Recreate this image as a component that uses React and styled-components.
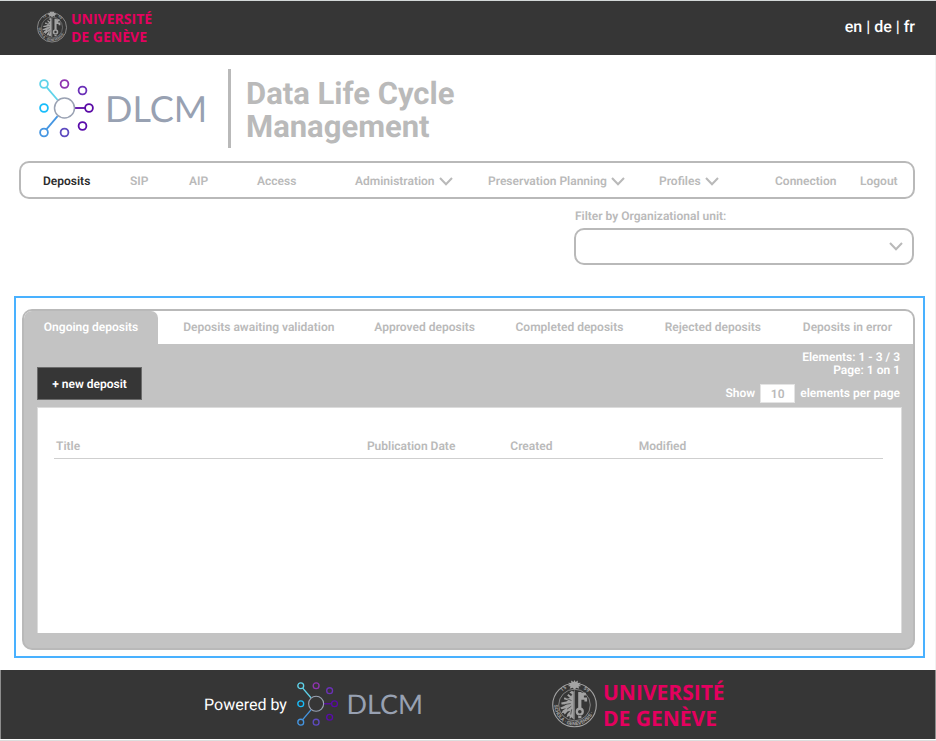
import React, { useId, useState } from "react";
import styled, { createGlobalStyle, css } from "styled-components";

const color = {
  dark: "#363636",
  line: "#b9b9b9",
  text: "#bababa",
  panel: "#c3c3c3",
  focus: "#49b1ff",
  pink: "#e4005f",
};

const GlobalStyle = createGlobalStyle`
  *, *::before, *::after { box-sizing: border-box; }
  body { margin: 0; background: #fff; font-family: Roboto, sans-serif; text-rendering: geometricPrecision; }
  button, input, select { font: inherit; color: inherit; text-rendering: inherit; }
`;

const Page = styled.div`
  min-height: 100vh;
  display: flex;
  flex-direction: column;
  border-top: 1px solid #d3d8d8;
  border-bottom: 1px solid #dddddd;
  font-size: 12px;
  line-height: 14px;
  font-weight: 600;
  color: ${color.text};
`;

const TopBar = styled.header`
  display: flex;
  align-items: center;
  justify-content: space-between;
  height: 54px;
  padding: 0 21px 2px 37px;
  background: ${color.dark};
`;

const Languages = styled.nav`
  color: #fff;
  font-size: 16px;
  line-height: 18px;
  font-weight: 500;
  a { color: inherit; text-decoration: none; }
`;

const Main = styled.main`
  flex: 1;
  border-right: 1px solid #f2f2f2;
`;

const Brand = styled.div`
  display: flex;
  align-items: center;
  margin: 14px 20px 13px 39px;
`;

const BrandTitle = styled.h1`
  margin: 0 0 0 21px;
  padding: 8px 0 5px 15px;
  border-left: 3px solid ${color.line};
  font-size: 31px;
  line-height: 33px;
  font-weight: 700;
  max-width: 260px;
`;

const NavBar = styled.nav`
  display: grid;
  grid-template-columns: 87fr 59fr 68fr 98fr 133fr 171fr 116fr 85fr 53fr;
  align-items: center;
  height: 38px;
  margin: 0 20px 0 19px;
  padding: 2px 0 0 22px;
  border: 2px solid ${color.line};
  border-radius: 10px;
`;

const navItem = css`
  justify-self: start;
  padding: 0;
  border: 0;
  background: none;
  color: ${(p) => (p.$active ? "#2d2d2d" : color.text)};
  text-decoration: none;
  white-space: nowrap;
  cursor: pointer;
`;

const NavLink = styled.a`${navItem}`;

const NavMenu = styled.button`
  ${navItem}
  display: flex;
  align-items: center;
  gap: 4px;
`;

const Filter = styled.div`
  display: flex;
  flex-direction: column;
  gap: 5px;
  width: 340px;
  margin: 10px 21px 31px auto;
  label { padding-left: 1px; }
`;

const SelectBox = styled.div`
  position: relative;
  svg { position: absolute; right: 11px; top: 14px; pointer-events: none; }
`;

const Select = styled.select`
  display: block;
  width: 100%;
  height: 37px;
  padding: 0 32px 0 12px;
  appearance: none;
  border: 2px solid ${color.line};
  border-radius: 10px;
  background: #fff;
`;

const Selection = styled.section`
  margin: 0 10px 12px 14px;
  padding: 11px 8px 6px 6px;
  border: 2px solid ${color.focus};
`;

const Panel = styled.div`
  display: flex;
  flex-direction: column;
  min-height: 341px;
  border: 2px solid ${color.line};
  border-radius: 10px;
  background: ${color.panel};
  overflow: hidden;
`;

const Tabs = styled.div`
  display: grid;
  grid-template-columns: 134fr 191fr 141fr 149fr 138fr 135fr;
  height: 33px;
  background: #fff;
`;

const Tab = styled.button`
  padding: 0 0 2px ${(p) => (p.$active ? 0 : 25)}px;
  border: 0;
  border-top-right-radius: ${(p) => (p.$active ? 7 : 0)}px;
  background: ${(p) => (p.$active ? color.panel : "transparent")};
  color: ${(p) => (p.$active ? "#fff" : color.text)};
  text-align: ${(p) => (p.$active ? "center" : "left")};
  white-space: nowrap;
  cursor: pointer;
`;

const Tools = styled.div`
  display: flex;
  justify-content: space-between;
  align-items: flex-end;
  padding: 7px 13px 4px;
  color: #fff;
`;

const NewButton = styled.button`
  height: 33px;
  width: 105px;
  margin-bottom: 3px;
  padding: 0;
  border: 1px solid #6b6b6b;
  background: ${color.dark};
  color: #fff;
  cursor: pointer;
`;

const Paging = styled.div`
  display: flex;
  flex-direction: column;
  text-align: right;
  line-height: 13px;
  p { margin: 0; }
`;

const PageSize = styled.div`
  display: flex;
  align-items: center;
  gap: 5px;
  margin-top: 7px;
  input {
    width: 35px;
    height: 19px;
    padding: 0;
    border: 1px solid #e4e4e4;
    background: #fff;
    color: ${color.text};
    text-align: center;
  }
`;

const Card = styled.div`
  flex: 1;
  margin: 0 11px 15px 13px;
  padding: 31px 18px 0 16px;
  border: 1px solid #dcdcdc;
  border-bottom: 0;
  background: #fff;
`;

const Table = styled.table`
  width: 100%;
  table-layout: fixed;
  border-collapse: collapse;
  th {
    padding: 0 0 5px 2px;
    border-bottom: 1px solid #cfcfcf;
    text-align: left;
    font-weight: 600;
  }
`;

const Col = styled.col`
  width: ${(p) => p.$width};
`;

const Footer = styled.footer`
  display: flex;
  justify-content: center;
  align-items: center;
  height: 69px;
  margin-bottom: 1px;
  padding-right: 6px;
  border: solid #8d8d8d;
  border-width: 0 1px;
  background: ${color.dark};
`;

const Powered = styled.div`
  display: flex;
  align-items: center;
  gap: 10px;
  margin-right: 129px;
  color: #fff;
  font-size: 16px;
  line-height: 20px;
  font-weight: 400;
`;

const Drawing = styled.svg`
  display: block;
  flex: none;
  overflow: visible;
`;

const Chevron = () => (
  <Drawing width="14" height="9" viewBox="0 0 14 9" fill="none" stroke={color.line} strokeWidth="2" aria-hidden="true">
    <path d="M1 1 7 7.3 13 1" />
  </Drawing>
);

const satellites = [
  [5, 6, "#5fd3ea"],
  [25.5, 6, "#9034b0"],
  [43.5, 12.5, "#6b31b8"],
  [5, 30, "#18bdfb"],
  [50, 30, "#5a0aa6"],
  [43.5, 48, "#5a0cab"],
  [5, 54.5, "#4596e2"],
  [25.5, 54.5, "#5e4bc0"],
];

const DlcmLogo = ({ width, height }) => (
  <Drawing width={width} height={height} viewBox="0 1 168 60" role="img" aria-label="DLCM">
    <g fill="none" strokeWidth="1.8">
      <path d="M7.6 9.2 18.6 22" stroke="#5fd3ea" />
      <path d="M7.6 51.2 18.6 38.2" stroke="#4596e2" />
      <path d="M35.8 30H46" stroke="#5a0aa6" />
      <circle cx="25.5" cy="30" r="10" stroke="#9aa2b3" strokeWidth="1.5" />
      {satellites.map(([x, y, stroke]) => (
        <circle key={`${x}-${y}`} cx={x} cy={y} r="3.9" stroke={stroke} />
      ))}
    </g>
    <text x="66" y="44" fontFamily="Lato, sans-serif" fontSize="36" fontWeight="400" fill="#98a1b2">DLCM</text>
  </Drawing>
);

const UniversityLogo = ({ width, height }) => {
  const ring = useId();
  return (
    <Drawing width={width} height={height} viewBox="0 -4 174 58" role="img" aria-label="Université de Genève">
      <defs>
        <path id={`${ring}b`} d="M4 17A20.2 20.2 0 1 0 41 17" />
        <path id={`${ring}t`} d="M6 17.5A18 18 0 0 1 39 17.5" />
      </defs>
      <g fill="none" stroke="#a3a3a3">
        <circle cx="22.5" cy="25" r="21.8" strokeWidth="1.1" />
        <circle cx="22.5" cy="25" r="15.8" strokeWidth="0.7" />
      </g>
      <g fill="#a3a3a3" fontFamily="Roboto, sans-serif" fontSize="5" fontWeight="700">
        <text><textPath href={`#${ring}b`} startOffset="8">SCHOLA · GENEVENSIS ·</textPath></text>
        <text><textPath href={`#${ring}t`} startOffset="7">15</textPath></text>
        <text><textPath href={`#${ring}t`} startOffset="30">59</textPath></text>
      </g>
      <g fill="#a3a3a3">
        <path d="m22.5 0 1 2 2.4-1.4-.2 2.5 3-.4-1.6 2.1 2.1 1.2-2.7.6.8 2.2-3-1.1-1.8 2.1-1.8-2.1-3 1.1.8-2.2-2.7-.6 2.1-1.2-1.6-2.1 3 .4-.2-2.5 2.4 1.4Z" />
        <path d="M21.8 11.4v28.4l-2.3-2.6-1.8 1.8-.2-3.2-3 1.6.9-3.5 3-3.1-2.9.8-2.7 3-1.3-1.8-1.9.5 1.1-2.7 3.5-2.4-4.6 1.1-1.5-1.6 3.9-1.7 3-1.8-5.4.2-.4-1.8 5-1 2-1.1-4.3-1.2.3-1.8 4.2.8 1.6-.4-2.8-2.5 1.1-1.4 3 2.3.3-2.4-2.2-1.3 2.3-1.7Z" />
        <path d="M26.2 12h3.2v16.3h-3.2zM29.4 12.8h4.5v2.7h-2v2h3.2v4.1h-2.7v-1.8h-3Z" />
        <path d="M27.8 27.5a4.1 4.1 0 1 1 0 8.2 4.1 4.1 0 0 1 0-8.2m0 2.4a1.8 1.8 0 1 0 0 3.6 1.8 1.8 0 0 0 0-3.6M26.2 35h3.2v3.2h-3.2Z" fillRule="evenodd" />
      </g>
      <path d="M22.5 10.4v29.2" stroke="#a3a3a3" strokeWidth="0.6" />
      <g fill="none" stroke={color.dark} strokeWidth="0.7">
        <path d="m14.5 18.5 5 2M13 24.5l5.7-1M15 29.2l4.3-3M18.7 34.5l1-5.2" />
        <circle cx="19.2" cy="14.6" r="0.5" />
      </g>
      <g fill={color.pink} fontFamily="'Open Sans', sans-serif" fontWeight="700">
        <text x="51" y="20" fontSize="21">UNIVERSITÉ</text>
        <text x="51" y="46" fontSize="21">DE GENÈVE</text>
      </g>
    </Drawing>
  );
};

const navItems = [
  { label: "Deposits", active: true },
  { label: "SIP" },
  { label: "AIP" },
  { label: "Access" },
  { label: "Administration", menu: true },
  { label: "Preservation Planning", menu: true },
  { label: "Profiles", menu: true },
  { label: "Connection" },
  { label: "Logout" },
];

const tabs = [
  "Ongoing deposits",
  "Deposits awaiting validation",
  "Approved deposits",
  "Completed deposits",
  "Rejected deposits",
  "Deposits in error",
];

const columns = [
  ["Title", "37.5%"],
  ["Publication Date", "17.3%"],
  ["Created", "15.5%"],
  ["Modified", "auto"],
];

export default function App() {
  const [pageSize, setPageSize] = useState("10");
  return (
    <Page>
      <GlobalStyle />
      <TopBar>
        <UniversityLogo width={116} height={39} />
        <Languages aria-label="Language">
          <a href="#en">en</a> | <a href="#de">de</a> | <a href="#fr">fr</a>
        </Languages>
      </TopBar>
      <Main>
        <Brand>
          <DlcmLogo width={168} height={60} />
          <BrandTitle>Data Life Cycle Management</BrandTitle>
        </Brand>
        <NavBar aria-label="Main">
          {navItems.map(({ label, active, menu }) =>
            menu ? (
              <NavMenu key={label} type="button" aria-haspopup="menu">
                {label}
                <Chevron />
              </NavMenu>
            ) : (
              <NavLink key={label} href={`#${label.toLowerCase()}`} $active={active}>
                {label}
              </NavLink>
            )
          )}
        </NavBar>
        <Filter>
          <label htmlFor="unit">Filter by Organizational unit:</label>
          <SelectBox>
            <Select id="unit">
              <option value="" aria-label="All units" />
            </Select>
            <Chevron />
          </SelectBox>
        </Filter>
        <Selection>
          <Panel>
            <Tabs role="tablist">
              {tabs.map((label, i) => (
                <Tab key={label} type="button" role="tab" aria-selected={i === 0} $active={i === 0}>
                  {label}
                </Tab>
              ))}
            </Tabs>
            <Tools>
              <NewButton type="button">+ new deposit</NewButton>
              <Paging>
                <p>Elements: 1 - 3 / 3</p>
                <p>Page: 1 on 1</p>
                <PageSize>
                  <label htmlFor="page-size">Show</label>
                  <input id="page-size" value={pageSize} onChange={(e) => setPageSize(e.target.value)} />
                  <span>elements per page</span>
                </PageSize>
              </Paging>
            </Tools>
            <Card>
              <Table>
                <colgroup>
                  {columns.map(([label, width]) => (
                    <Col key={label} $width={width} />
                  ))}
                </colgroup>
                <thead>
                  <tr>
                    {columns.map(([label]) => (
                      <th key={label} scope="col">{label}</th>
                    ))}
                  </tr>
                </thead>
              </Table>
            </Card>
          </Panel>
        </Selection>
      </Main>
      <Footer>
        <Powered>
          Powered by
          <DlcmLogo width={126} height={45} />
        </Powered>
        <UniversityLogo width={174} height={58} />
      </Footer>
    </Page>
  );
}
